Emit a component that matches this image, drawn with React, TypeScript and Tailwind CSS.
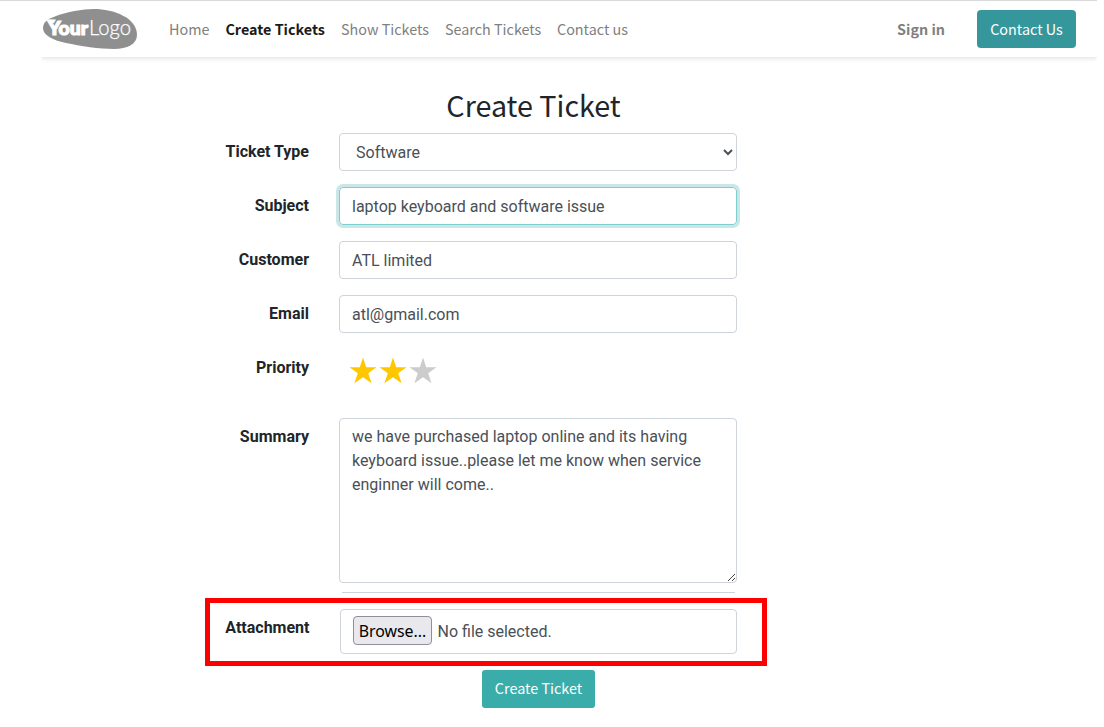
import type { ReactNode } from "react";

const sans = "font-['Noto_Sans_CJK_SC',sans-serif]";
const field =
  "block w-[398px] rounded-[4px] border border-[#ced4da] bg-white px-3 text-[16px] leading-6 text-[#495057] outline-none";

function Logo() {
  return (
    <svg width="96" height="42" viewBox="0 0 96 42" aria-label="YourLogo">
      <path
        d="M1 20C1 14 6 11 14 8C25 4 40 1 52 1C72 1 95 10 95 27C95 36 85 41 72 41C58 41 38 38 24 35C10 32 1 27 1 20Z"
        fill="#8f8f8f"
      />
      <path d="M4.500 12.500L6 11.300L14 11.500L12 15L8 15L7.500 13Z" fill="#fff" />
      <text x="6" y="26.500" fill="#fff" stroke="#fff" strokeWidth="1.2" fontFamily="Lato" fontWeight="900" fontSize="19.500" textLength="40" lengthAdjust="spacingAndGlyphs">
        Your
      </text>
      <text x="47" y="26.500" fill="#fff" stroke="#fff" strokeWidth="0.25" fontFamily="Lato" fontWeight="300" fontSize="21.500" textLength="42" lengthAdjust="spacingAndGlyphs">
        Logo
      </text>
    </svg>
  );
}

function Row({ label, className, children }: { label: string; className: string; children: ReactNode }) {
  return (
    <div className={`flex ${className}`}>
      <div className="mr-[30px] w-[309px] shrink-0 pt-[7px] text-right text-[16px] leading-6 font-bold text-[#212529]">
        {label}
      </div>
      {children}
    </div>
  );
}

function Star({ fill }: { fill: string }) {
  return (
    <svg width="30" height="30" viewBox="0 0 30 30">
      <path d="M15 2.500L18.200 12.200H28.500L20.200 18.300L23.600 28.200L15 22.200L6.400 28.200L9.800 18.300L1.500 12.200H11.800Z" fill={fill} />
    </svg>
  );
}

export default function App() {
  return (
    <div className="h-[727px] w-[1104px] overflow-hidden bg-white font-['Roboto',sans-serif]">
      <div className="h-px w-[1097px] bg-[#d9d9d9]" />
      <header className={`ml-[41px] flex h-14 w-[1056px] items-center text-[14.360px] leading-6 text-[#808080] shadow-[0_2px_4px_rgba(0,0,0,0.1)] [clip-path:inset(0_0_-8px_0)] ${sans}`}>
        <div className="ml-px w-[127px]">
          <Logo />
        </div>
        <nav className="flex whitespace-nowrap">
          <a className="w-[56.400px]">Home</a>
          <a className="w-[115.600px] font-bold text-[#1a1a1a]">Create Tickets</a>
          <a className="w-[104px]">Show Tickets</a>
          <a className="w-[112px]">Search Tickets</a>
          <a>Contact us</a>
        </nav>
        <a className="mr-8 ml-auto font-bold">Sign in</a>
        <button className="mr-[21px] h-[38px] w-[99px] rounded-[4px] bg-[#35979c] text-white">Contact Us</button>
      </header>

      <main>
        <h1 className={`mt-[29px] mb-[9px] w-[1067px] text-center text-[28.700px] leading-[38px] text-[#212529] ${sans}`}>
          Create Ticket
        </h1>
        <form>
          <Row label="Ticket Type" className="h-[54px]">
            <div className="relative h-[38px]">
              <select className={`${field} h-[38px] appearance-none pt-[2px] pl-4`}>
                <option>Software</option>
              </select>
              <svg className="pointer-events-none absolute top-[15px] right-[3px]" width="12" height="9" viewBox="0 0 12 9">
                <path d="M2 2L6 6L10 2" fill="none" stroke="#495057" strokeWidth="2" />
              </svg>
            </div>
          </Row>
          <Row label="Subject" className="h-[54px]">
            <input
              className="block h-[38px] w-[398px] rounded-[4px] border border-[#7cced0] px-3 text-[16px] text-[#495057] shadow-[0_0_0_3px_#cbe6e6] outline-none"
              defaultValue="laptop keyboard and software issue"
              spellCheck={false}
            />
          </Row>
          <Row label="Customer" className="h-[54px]">
            <input className={`${field} h-[38px]`} defaultValue="ATL limited" />
          </Row>
          <Row label="Email" className="h-[54px]">
            <input className={`${field} h-[38px]`} defaultValue="atl@gmail.com" />
          </Row>
          <Row label="Priority" className="h-[69px]">
            <div className="ml-[9px] flex pt-[6px]">
              <Star fill="#ffc700" />
              <Star fill="#ffc700" />
              <Star fill="#cccccc" />
            </div>
          </Row>
          <Row label="Summary" className="h-[165px]">
            <div className="relative">
              <textarea
                className={`${field} h-[165px] resize-none py-[6px]`}
                spellCheck={false}
                defaultValue="we have purchased laptop online and its having keyboard issue..please let me know when service enginner will come.."
              />
              <svg className="absolute right-px bottom-px" width="9" height="9" viewBox="0 0 9 9">
                <path d="M1 8L8 1M5 8L8 5" stroke="#444" strokeWidth="1" />
              </svg>
            </div>
          </Row>
          <div className="mt-[9px] ml-[342px] h-px w-[393px] bg-[#ced4da]" />
          <div className="mt-[5px] ml-[205px] flex h-[68px] w-[562px] border-[5px] border-[#ff0000]">
            <div className="w-[99.500px] pt-[13px] text-right text-[16px] leading-6 font-bold text-[#212529]">Attachment</div>
            <div className="mt-[6px] ml-[30.500px] flex h-[45px] w-[397px] items-center rounded-[4px] border border-[#ced4da] pl-3 text-[16px] text-[#495057]">
              <button type="button" className="mr-[5.500px] mb-[2px] h-[29px] w-[79px] rounded-[4px] border border-[#8f8f9d] bg-[#e9e9ed] font-['Noto_Sans',sans-serif] text-[15.900px] leading-[22px] whitespace-nowrap text-black">
                Browse...
              </button>
              No file selected.
            </div>
          </div>
          <button type="button" className={`mt-1 ml-[482px] block h-[38px] w-[113px] rounded-[3px] bg-[#3aadaa] pb-[2px] text-[14.360px] text-white ${sans}`}>
            Create Ticket
          </button>
        </form>
      </main>
    </div>
  );
}
